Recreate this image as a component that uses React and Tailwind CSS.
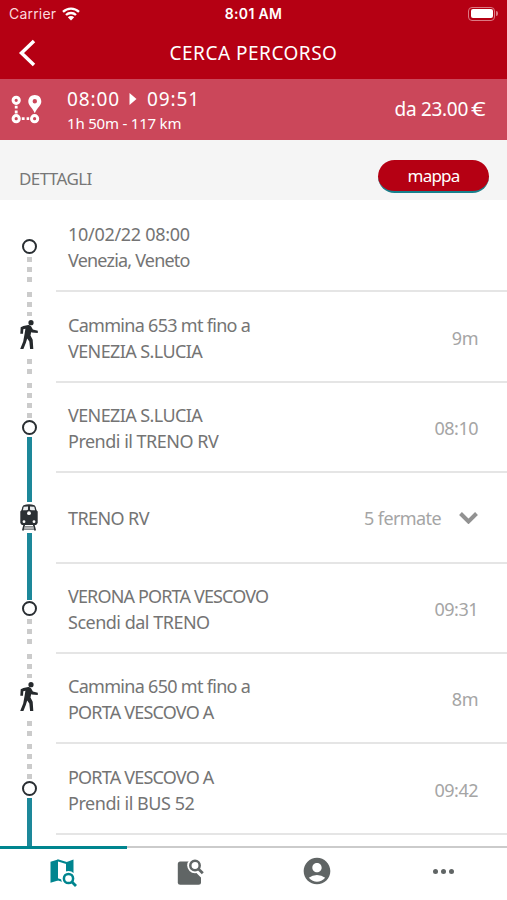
import React from "react";
import { MdAccountCircle } from "react-icons/md";

const steps = [
  {
    type: "start",
    title: "10/02/22 08:00",
    titleClass: "tracking-[-0.3px]",
    text: "Venezia, Veneto",
    textClass: "tracking-[-0.8px]",
  },
  {
    type: "walk",
    title: "Cammina 653 mt fino a",
    titleClass: "tracking-[-0.7px]",
    text: "VENEZIA S.LUCIA",
    textClass: "tracking-[-0.6px]",
    time: "9m",
  },
  {
    type: "board",
    title: "VENEZIA S.LUCIA",
    titleClass: "tracking-[-0.6px]",
    text: "Prendi il TRENO RV",
    textClass: "tracking-[-0.5px]",
    time: "08:10",
  },
  {
    type: "train",
    title: "TRENO RV",
    titleClass: "tracking-[-0.6px]",
    stops: "5 fermate",
  },
  {
    type: "alight",
    title: "VERONA PORTA VESCOVO",
    titleClass: "tracking-[-0.85px]",
    text: "Scendi dal TRENO",
    textClass: "tracking-[-0.5px]",
    time: "09:31",
  },
  {
    type: "walk",
    title: "Cammina 650 mt fino a",
    titleClass: "tracking-[-0.7px]",
    text: "PORTA VESCOVO A",
    textClass: "tracking-[-0.8px]",
    time: "8m",
  },
  {
    type: "board",
    title: "PORTA VESCOVO A",
    titleClass: "tracking-[-0.8px]",
    text: "Prendi il BUS 52",
    textClass: "tracking-[-0.45px]",
    time: "09:42",
  },
];

function WalkIcon() {
  return (
    <svg className="h-[29px] w-[18px]" viewBox="0 0 18 29" fill="none">
      <circle cx="11" cy="2.7" r="2.6" fill="#25292c" />
      <path
        d="M3.4 5.9 8.2 5Q10.300 4.800 11.200 6.500L12.900 9.600 17.800 10.700V13L11.600 12.500 11.200 12 10.500 15.500 12.700 19.700 13.300 29H10.100L9.300 21.500 7.200 18.400 5.900 22.800 3.400 29H.2L3.200 21.600 4.700 13.200 5.400 8.700 3.300 9.300 3 13.800H.3L.7 7.300Z"
        fill="#25292c"
      />
    </svg>
  );
}

function TrainIcon() {
  return (
    <svg className="h-[27px] w-[18px]" viewBox="0 0 18 27">
      <path
        d="M3.500 1.300Q9-.8 14.500 1.300 16 2.200 16.400 6L17.700 7.500V19L16.200 21H1.800L.3 19V7.500L1.600 6Q2 2.200 3.500 1.300Z"
        fill="#2b3034"
      />
      <path d="M3.700 2.800 8 2.400V5.700L6.500 6.300H2.900Zm10.600 0L10 2.400V5.700L11.500 6.300H15.100Z" fill="#e9ecee" />
      <circle cx="9" cy="9.200" r="1.900" fill="#fff" />
      <circle cx="4" cy="17.700" r="1.400" fill="#fff" />
      <circle cx="14" cy="17.700" r="1.400" fill="#fff" />
      <path d="M4.300 20.500 2.800 26.500M13.700 20.500l1.500 6" stroke="#2b3034" strokeWidth="1.700" />
      <path d="M4.500 22.900h9M4 25.200h10" stroke="#62676a" strokeWidth="1.300" />
    </svg>
  );
}

function RouteIcon() {
  return (
    <svg className="h-[29px] w-[31px]" viewBox="0 0 31 29" fill="none">
      <g stroke="#fff" strokeWidth="3">
        <circle cx="5.200" cy="5.300" r="3.100" />
        <circle cx="5.200" cy="23.700" r="3.100" />
        <circle cx="23.600" cy="23.700" r="3.100" />
      </g>
      <path
        d="M23.800 0c-3.900 0-6.500 2.800-6.500 6.500 0 3.900 4 6 6.500 11.700 2.500-5.700 6.500-7.800 6.500-11.700 0-3.700-2.600-6.500-6.500-6.500Zm0 8.500a2.200 2.200 0 1 1 0-4.400 2.200 2.200 0 0 1 0 4.400Z"
        fill="#fff"
      />
      <path d="M5.200 10.800v2.800m0 2v2.800M10.800 23.700h2.800m2 0h2.600" stroke="#fff" strokeWidth="2.800" />
    </svg>
  );
}

function MapSearchIcon() {
  return (
    <svg className="h-[28px] w-[27px]" viewBox="0 0 27 28" fill="none">
      <path d="M.5 2.800 8 .5V21.500L.5 23.800Z" fill="#00858f" />
      <path d="M16 3.200 23.500 .5V14H16Z" fill="#00858f" />
      <path d="M7.500 1.300 16.500 4M7.500 20.300 13 22" stroke="#00858f" strokeWidth="2" />
      <circle cx="18.500" cy="19.500" r="7.500" fill="#fff" />
      <circle cx="18.500" cy="19.500" r="4.600" stroke="#00858f" strokeWidth="2.500" />
      <path d="m21.800 22.800 4.200 4.200" stroke="#00858f" strokeWidth="2.800" />
    </svg>
  );
}

function NoteSearchIcon() {
  return (
    <svg className="h-[27px] w-[27px]" viewBox="0 0 27 27" fill="none">
      <rect x=".8" y="2.500" width="23.200" height="23.200" rx="2.500" fill="#606565" />
      <path d="M17 7 27 17" stroke="#fff" strokeWidth="6.500" />
      <circle cx="18" cy="6.500" r="7.800" fill="#fff" />
      <circle cx="18" cy="6.500" r="4.700" stroke="#606565" strokeWidth="2.500" />
      <path d="m21.500 10 4.300 4.300" stroke="#606565" strokeWidth="2.700" />
    </svg>
  );
}

function Dots({ count }) {
  return (
    <div className="flex flex-col gap-[5px]">
      {Array.from({ length: count }).map((_, i) => (
        <div key={i} className="h-[5px] w-[5px] bg-[#cbcbcb]"></div>
      ))}
    </div>
  );
}

function Timeline({ type }) {
  if (type === "train") {
    return (
      <div className="flex w-[58px] flex-col items-center">
        <div className="h-[30px] w-[5px] bg-[#1d889a]"></div>
        <div className="flex h-[31px] items-center">
          <TrainIcon />
        </div>
        <div className="w-[5px] flex-1 bg-[#1d889a]"></div>
      </div>
    );
  }

  if (type === "walk") {
    return (
      <div className="flex w-[58px] flex-col items-center pt-px">
        <div className="h-[24px] overflow-hidden">
          <Dots count={3} />
        </div>
        <div className="mt-[4px] h-[29px]">
          <WalkIcon />
        </div>
        <div className="mt-[10px]">
          <Dots count={2} />
        </div>
      </div>
    );
  }

  return (
    <div className="flex w-[58px] flex-col items-center">
      <div className="h-[38px] pt-px">
        {type === "board" && <Dots count={4} />}
        {type === "alight" && <div className="-mt-px h-[37px] w-[5px] bg-[#1d889a]"></div>}
      </div>
      <div className="h-[15px] w-[15px] rounded-full border-2 border-[#292e32] bg-white"></div>
      {type === "board" ? (
        <div className="mt-[2px] w-[5px] flex-1 bg-[#1d889a]"></div>
      ) : (
        <div className="mt-[3px]">
          <Dots count={3} />
        </div>
      )}
    </div>
  );
}

function App() {
  return (
    <div className="flex h-[900px] w-[507px] flex-col overflow-hidden bg-white font-['Noto_Sans',sans-serif] whitespace-nowrap">
      {/* Status bar + title */}
      <header className="h-[79px] shrink-0 bg-[#b50013] text-white">
        <div className="grid h-[27px] grid-cols-3 items-center px-[9px] font-['Inter',sans-serif]">
          <div className="flex items-center gap-[6px] text-[14px] text-[#fbd9dc]">
            <span className="tracking-[0.200px]">Carrier</span>
            <svg className="h-[14px] w-[18px]" viewBox="0 0 18 14" fill="none">
              <path d="M1 4.800a11.500 11.500 0 0 1 16 0M4 8a7.200 7.200 0 0 1 10 0" stroke="#fff" strokeWidth="2.300" />
              <path d="m9 13.500-3.200-3.200a4.500 4.500 0 0 1 6.400 0Z" fill="#fff" />
            </svg>
          </div>
          <div className="text-center text-[14px] font-semibold tracking-[0.300px]">8:01 AM</div>
          <div className="flex items-center justify-end">
            <div className="h-[14px] w-[27px] rounded-[4px] border border-[#dc7983] p-[1.500px]">
              <div className="h-full rounded-[2px] bg-white"></div>
            </div>
            <div className="ml-px h-[5px] w-[2px] rounded-r-full bg-[#dc7983]"></div>
          </div>
        </div>
        <div className="flex h-[52px] items-center">
          <svg className="ml-[18px] h-[28px] w-[18px]" viewBox="0 0 18 28" fill="none">
            <path d="M16 2 3.500 14 16 26" stroke="#fff" strokeWidth="3.500" />
          </svg>
          <h1 className="flex-1 pr-[36px] text-center text-[19px] tracking-[0.500px]">CERCA PERCORSO</h1>
        </div>
      </header>

      {/* Route summary */}
      <section className="flex h-[61px] shrink-0 items-center bg-[#cb475a] pr-[21px] pl-[11px] text-white">
        <RouteIcon />
        <div className="ml-[25px] flex-1">
          <div className="flex items-center text-[19px] leading-[26px] tracking-[0.900px]">
            <span>08:00</span>
            <svg className="mr-[10px] ml-[9px] h-[12px] w-[8px]" viewBox="0 0 8 12">
              <path d="M.5 0 7.500 6 .5 12Z" fill="#fff" />
            </svg>
            <span>09:51</span>
          </div>
          <p className="text-[15px] leading-[22px] tracking-[-0.200px]">1h 50m - 117 km</p>
        </div>
        <p className="flex gap-[3px] text-[19px] tracking-[-0.300px]">
          <span>da 23.00</span>
          <span className="inline-block w-[15px] origin-left scale-x-135">€</span>
        </p>
      </section>

      {/* Details heading */}
      <section className="flex h-[60px] shrink-0 items-center justify-between bg-[#f5f5f5] pr-[18px] pl-[19px]">
        <h2 className="pt-[17px] text-[17px] tracking-[-0.600px] text-[#777]">DETTAGLI</h2>
        <button className="mt-[12px] h-[33px] w-[111px] rounded-full border-b-2 border-[#17808c] bg-[#b50013] pt-px text-[17px] tracking-[-0.800px] text-white">
          mappa
        </button>
      </section>

      {/* Steps */}
      <main className="min-h-0 flex-1 overflow-hidden pt-px">
        {steps.map((step, index) => (
          <div key={index} className="flex h-[90.400px]">
            <Timeline type={step.type} />
            <div className="mt-px -mr-0 -mb-px -ml-[2px] flex flex-1 items-center justify-between border-b-2 border-[#e5e5e5] pt-[2px] pr-[29px] pl-[12px] text-[18px] leading-[26px] text-[#747474]">
              <div>
                <p className={step.titleClass}>{step.title}</p>
                {step.text && <p className={step.textClass}>{step.text}</p>}
              </div>
              {step.time && <span className="tracking-[-0.500px] text-[#a5a5a5]">{step.time}</span>}
              {step.stops && (
                <div className="flex items-center gap-[18px] text-[#a5a5a5]">
                  <span className="tracking-[-0.600px]">{step.stops}</span>
                  <svg className="h-[12px] w-[19px]" viewBox="0 0 19 12" fill="none">
                    <path d="m1.500 1.500 8 8 8-8" stroke="#929292" strokeWidth="4" />
                  </svg>
                </div>
              )}
            </div>
          </div>
        ))}
        {/* Next leg, cut off by the tab bar */}
        <div className="flex">
          <Timeline type="train" />
        </div>
      </main>

      {/* Bottom tabs */}
      <nav className="grid h-[54px] shrink-0 grid-cols-4 bg-white">
        <div className="flex justify-center border-t-[3px] border-[#00858f] pt-[10px]">
          <MapSearchIcon />
        </div>
        <div className="flex justify-center border-t-2 border-[#cbcbcb] pt-[11px]">
          <NoteSearchIcon />
        </div>
        <div className="flex justify-center border-t-2 border-[#cbcbcb] pt-[7px]">
          <MdAccountCircle className="h-[32px] w-[32px] text-[#606565]" />
        </div>
        <div className="flex justify-center gap-[3px] border-t-2 border-[#cbcbcb] pt-[21px]">
          <div className="h-[5px] w-[5px] rounded-full bg-[#606565]"></div>
          <div className="h-[5px] w-[5px] rounded-full bg-[#606565]"></div>
          <div className="h-[5px] w-[5px] rounded-full bg-[#606565]"></div>
        </div>
      </nav>
    </div>
  );
}

export default App;
